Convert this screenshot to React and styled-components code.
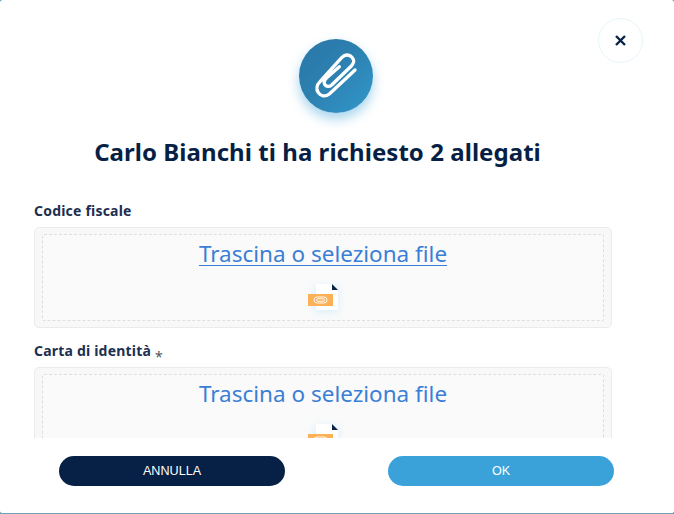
import React from 'react';
import styled, { createGlobalStyle } from 'styled-components';

const Global = createGlobalStyle`
  html, body { margin: 0; padding: 0; background: #6fa3b8; }
  #root { width: 674px; height: 514px; }
`;
const Dialog = styled.div`
  position: relative; width: 674px; height: 513px; background: #fff;
  border-radius: 3px; overflow: hidden; display: flex; flex-direction: column;
  font-family: "Noto Sans", sans-serif; box-sizing: border-box;
`;
const Close = styled.button`
  position: absolute; top: 18px; left: 598px; width: 45px; height: 45px; border-radius: 50%;
  background: #fff; border: 1px solid #e6f6fa; padding: 0; display: flex; align-items: center; justify-content: center;
`;
const Scroll = styled.div`
  height: 438px; overflow: hidden; display: flex; flex-direction: column; padding: 39px 62px 0 34px; box-sizing: border-box; flex: none;
`;
const Badge = styled.div`
  align-self: center; width: 74px; height: 74px; border-radius: 50%; margin-left: 26px; flex: none;
  background: linear-gradient(135deg, #2a77a8 0%, #2c80b0 45%, #3298cb 100%);
  box-shadow: 0 6px 12px rgba(56, 160, 215, 0.45);
  display: flex; align-items: center; justify-content: center;
`;
const Title = styled.h1`
  margin: 21px 0 0 0; font-size: 24px; line-height: 36px; font-weight: 700; color: #081f45; text-align: center; padding-right: 11px; white-space: nowrap; letter-spacing: 0.05px;
`;
const Label = styled.div`
  font-size: 14px; line-height: 19px; font-weight: 700; color: #1c2f50; display: flex; align-items: baseline; gap: 4px; letter-spacing: 0.2px;
  margin-top: ${p => p.$top}px;
`;
const Star = styled.span`
  font-size: 14px; font-weight: 400; color: #555; position: relative; top: 6px;
`;
const Drop = styled.div`
  margin-top: 7px; width: 578px; height: 101px; flex: none; box-sizing: border-box; padding: 6px 7px;
  background: #f8f8f8; border: 1px solid #ebebeb; border-radius: 5px;
`;
const Inner = styled.div`
  height: 87px; box-sizing: border-box; border: 1px dashed #dedede; border-radius: 2px; background: #fafafa;
  display: flex; flex-direction: column; align-items: center; padding-top: 1px;
`;
const DropText = styled.span`
  font-size: 22.5px; line-height: 36px; color: #3a7fd5; text-decoration: ${p => p.$u ? 'underline' : 'none'};
  text-decoration-thickness: 1px; text-underline-offset: 3px;
`;
const FileIconBox = styled.div`
  margin-top: 12px; margin-left: 3px; width: 34px; height: 30px; position: relative; flex: none;
`;
const Footer = styled.div`
  flex: 1; display: flex; align-items: flex-start; padding: 18px 60px 0 59px; justify-content: space-between; background: #fff;
`;
const Btn = styled.button`
  width: 226px; height: 30px; border: none; border-radius: 15px; padding: 0;
  background: ${p => p.$bg}; color: #fff; font-family: "Liberation Sans", sans-serif; font-size: 12.6px;
`;

const Clip = () => (
  <svg width="50" height="50" viewBox="123 93 150 150" fill="none" stroke="#fff" strokeWidth="10" strokeLinecap="round" strokeLinejoin="round">
    <path d="M255 150 L178 222 C165 232 152 228 145 218 C138 208 140 195 150 185 L215 113 C225 103 238 102 246 112 C254 120 252 130 244 138 L185 195 C177 202 168 200 164 193 C160 186 165 178 172 172 L208 140" />
  </svg>
);
const FileIcon = () => (
  <svg width="34" height="30" viewBox="0 0 34 30" style={{ overflow: 'visible' }}>
    <defs>
      <filter id="g" x="-50%" y="-50%" width="200%" height="200%"><feGaussianBlur stdDeviation="4" /></filter>
    </defs>
    <rect x="6" y="2" width="24" height="26" fill="#bfe6f7" opacity="0.55" filter="url(#g)" />
    <path d="M8 0 H24 L30 6 V26 H8 Z" fill="#fff" />
    <path d="M24 0 L30 6 H24 Z" fill="#0a2349" />
    <rect x="0" y="10" width="25" height="12" fill="#fdb157" />
    <g fill="none" stroke="#fff" strokeWidth="1" opacity="0.9">
      <rect x="6" y="13" width="13" height="6" rx="3" />
      <rect x="8.5" y="14.8" width="8" height="2.6" rx="1.3" />
    </g>
  </svg>
);

const Zone = ({ label, star, top, underline }) => (
  <>
    <Label $top={top}>{label}{star && <Star>*</Star>}</Label>
    <Drop>
      <Inner>
        <DropText $u={underline}>Trascina o seleziona file</DropText>
        <FileIconBox><FileIcon /></FileIconBox>
      </Inner>
    </Drop>
  </>
);

export default function App() {
  return (
    <>
      <Global />
      <Dialog>
        <Scroll>
          <Badge><Clip /></Badge>
          <Title>Carlo Bianchi ti ha richiesto 2 allegati</Title>
          <Zone label="Codice fiscale" top={31} underline />
          <Zone label="Carta di identità" star top={13} />
        </Scroll>
        <Footer>
          <Btn $bg="#072046">ANNULLA</Btn>
          <Btn $bg="#3aa2d9">OK</Btn>
        </Footer>
        <Close>
          <svg width="11" height="11" viewBox="0 0 11 11" stroke="#0a2349" strokeWidth="2.4"><path d="M1 1 L10 10 M10 1 L1 10" /></svg>
        </Close>
      </Dialog>
    </>
  );
}
